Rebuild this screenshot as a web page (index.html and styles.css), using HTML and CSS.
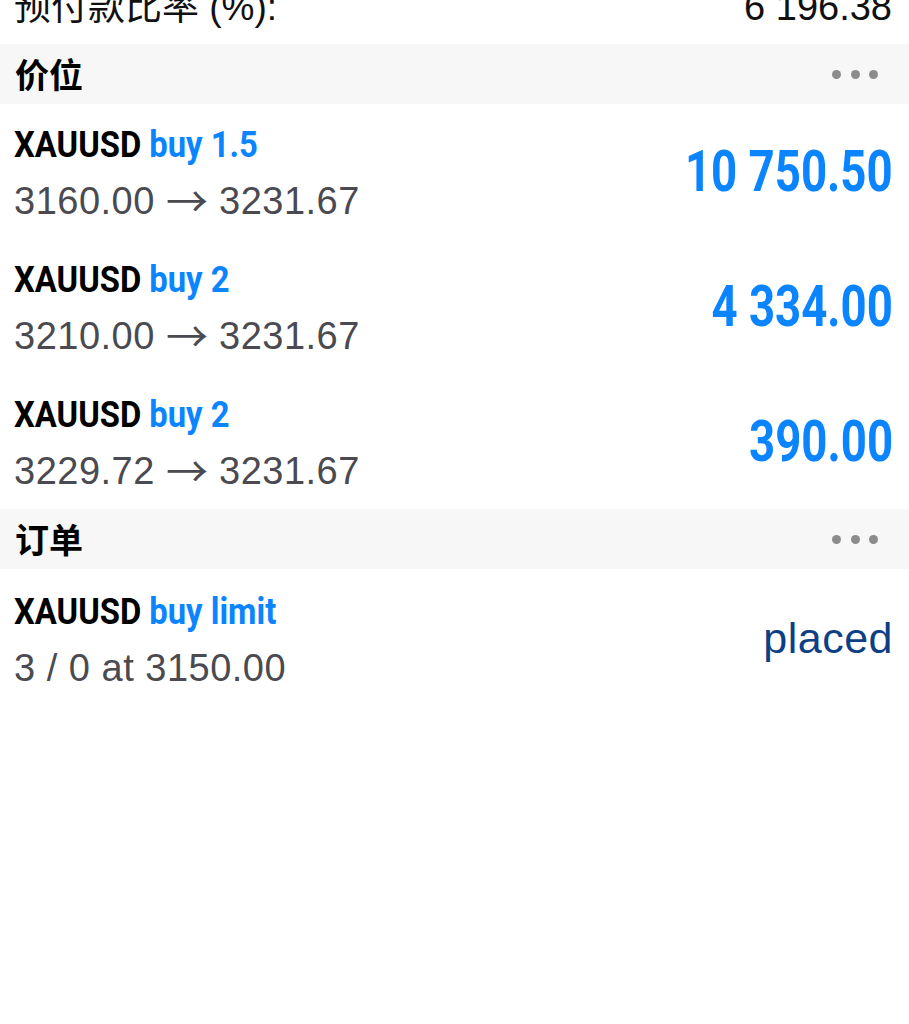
FILE: index.html
```html
<!DOCTYPE html>
<html lang="zh">
<head>
<meta charset="utf-8">
<title>交易</title>
<link rel="stylesheet" href="styles.css">
</head>
<body>
<div class="screen">
  <div class="summary">
    <span class="summary-label">预付款比率 (%):</span>
    <span class="summary-value">6 196.38</span>
  </div>

  <div class="section">
    <span class="section-title">价位</span>
    <span class="dots"><i></i><i></i><i></i></span>
  </div>

  <div class="item">
    <div class="item-info">
      <div class="item-title"><span class="sym">XAUUSD</span> <span class="side">buy 1.5</span></div>
      <div class="item-sub">3160.00 <span class="arrow">→</span> 3231.67</div>
    </div>
    <div class="item-value">10 750.50</div>
  </div>

  <div class="item">
    <div class="item-info">
      <div class="item-title"><span class="sym">XAUUSD</span> <span class="side">buy 2</span></div>
      <div class="item-sub">3210.00 <span class="arrow">→</span> 3231.67</div>
    </div>
    <div class="item-value">4 334.00</div>
  </div>

  <div class="item">
    <div class="item-info">
      <div class="item-title"><span class="sym">XAUUSD</span> <span class="side">buy 2</span></div>
      <div class="item-sub">3229.72 <span class="arrow">→</span> 3231.67</div>
    </div>
    <div class="item-value">390.00</div>
  </div>

  <div class="section">
    <span class="section-title">订单</span>
    <span class="dots"><i></i><i></i><i></i></span>
  </div>

  <div class="item order">
    <div class="item-info">
      <div class="item-title"><span class="sym">XAUUSD</span> <span class="side">buy limit</span></div>
      <div class="item-sub">3 / 0 at 3150.00</div>
    </div>
    <div class="item-status">placed</div>
  </div>
</div>
</body>
</html>
```

FILE: styles.css
```css
html, body {
  margin: 0;
  padding: 0;
  background: #ffffff;
}

.screen {
  width: 909px;
  height: 1024px;
  overflow: hidden;
  background: #ffffff;
  font-family: "Liberation Sans", "Noto Sans CJK SC", sans-serif;
}

.summary {
  height: 44px;
  display: flex;
  justify-content: space-between;
  align-items: flex-end;
  padding: 0 17px 0 14px;
  box-sizing: border-box;
  overflow: hidden;
}

.summary-label,
.summary-value {
  font-size: 37px;
  line-height: 37px;
  color: #111111;
  margin-bottom: 18px;
}

.summary-value {
  font-size: 38px;
}

.section {
  height: 60px;
  background: #f7f7f7;
  display: flex;
  justify-content: space-between;
  align-items: center;
  padding: 0 31px 0 15px;
}

.section-title {
  font-family: "Noto Sans CJK SC", sans-serif;
  font-weight: 700;
  font-size: 34px;
  line-height: 40px;
  color: #000000;
}

.dots {
  display: flex;
  gap: 9.5px;
}

.dots i {
  display: block;
  width: 9px;
  height: 9px;
  border-radius: 50%;
  background: #8c8c8c;
}

.item {
  height: 135px;
  display: flex;
  justify-content: space-between;
  align-items: center;
  padding: 0 16px 0 14px;
  box-sizing: border-box;
}

.item-info {
  display: flex;
  flex-direction: column;
  align-self: flex-start;
  padding-top: 13px;
}

.item-title {
  display: inline-block;
  font-family: "Roboto", sans-serif;
  font-weight: 700;
  font-size: 36px;
  line-height: 56px;
  white-space: nowrap;
  transform: scaleX(0.91);
  transform-origin: left center;
}

.sym {
  color: #000000;
}

.side {
  color: #0a84ff;
}

.item-sub {
  font-family: "Liberation Sans", sans-serif;
  font-size: 38px;
  letter-spacing: 0.5px;
  line-height: 56px;
  color: #4a4a50;
  white-space: nowrap;
}

.arrow {
  font-family: "Noto Sans CJK SC", sans-serif;
  font-weight: 400;
  font-size: 42px;
  line-height: 1;
  letter-spacing: 0;
  vertical-align: -3px;
}

.item-value {
  font-family: "Roboto", sans-serif;
  font-weight: 700;
  font-size: 57px;
  line-height: 57px;
  color: #0a84ff;
  white-space: nowrap;
  transform: scaleX(0.8);
  transform-origin: right center;
}

.order .item-info {
  padding-top: 15px;
}

.item-status {
  font-family: "Liberation Sans", sans-serif;
  font-size: 43px;
  line-height: 43px;
  color: #0d3f85;
  letter-spacing: 0.5px;
  margin-top: 4px;
}
```
